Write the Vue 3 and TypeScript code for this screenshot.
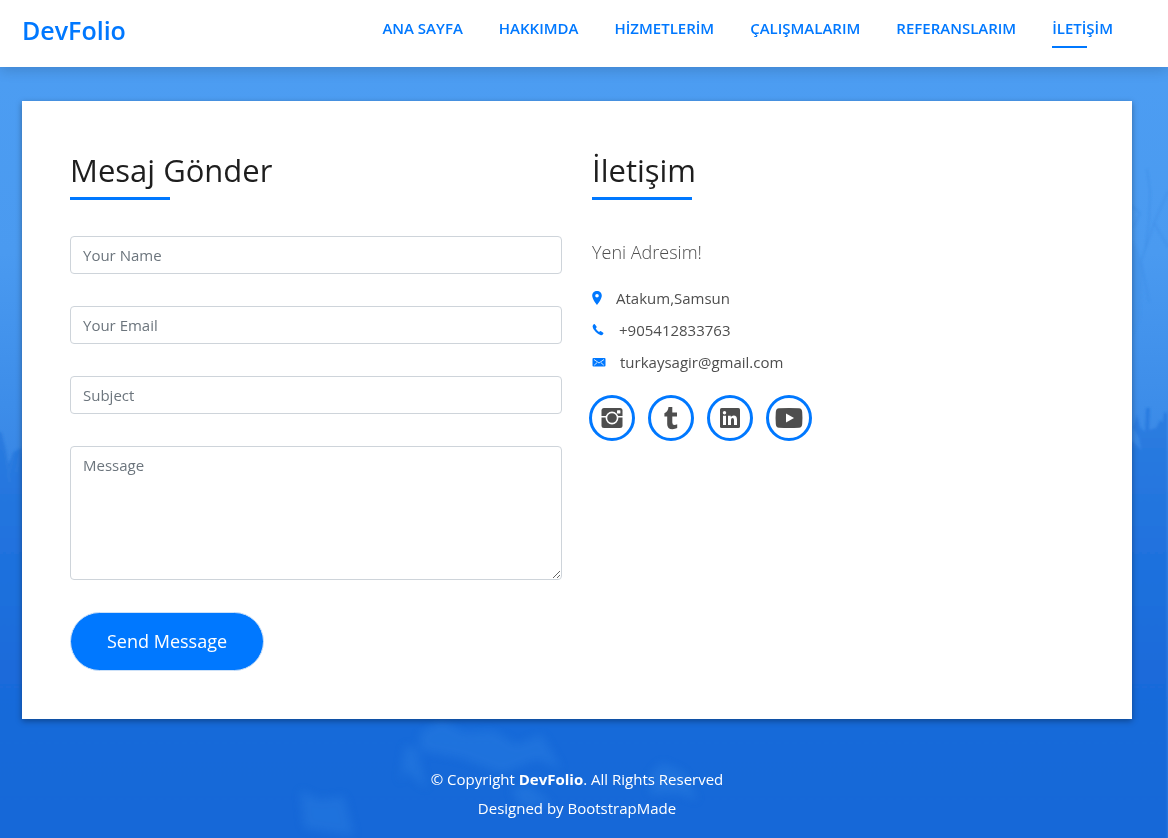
<script setup lang="ts">
import { ref } from 'vue'

interface NavItem {
  label: string
  href: string
  active?: boolean
}

const navItems: NavItem[] = [
  { label: 'ANA SAYFA', href: '#home' },
  { label: 'HAKKIMDA', href: '#about' },
  { label: 'HİZMETLERİM', href: '#service' },
  { label: 'ÇALIŞMALARIM', href: '#work' },
  { label: 'REFERANSLARIM', href: '#testimonials' },
  { label: 'İLETİŞİM', href: '#contact', active: true },
]

const name = ref('')
const email = ref('')
const subject = ref('')
const message = ref('')
</script>

<template>
  <div class="page">
    <svg class="backdrop" viewBox="0 0 1168 838" preserveAspectRatio="none" aria-hidden="true">
      <defs>
        <linearGradient id="sky" x1="0" y1="0" x2="0" y2="1">
          <stop offset="0" stop-color="#4d9ef3" />
          <stop offset="0.3" stop-color="#4a9af0" />
          <stop offset="0.48" stop-color="#3d8de9" />
          <stop offset="0.56" stop-color="#3886e5" />
          <stop offset="1" stop-color="#2a78de" />
        </linearGradient>
        <linearGradient id="ground" x1="0" y1="420" x2="0" y2="838" gradientUnits="userSpaceOnUse">
          <stop offset="0" stop-color="#2b7ce0" />
          <stop offset="0.3" stop-color="#2072de" />
          <stop offset="0.6" stop-color="#1a6bda" />
          <stop offset="1" stop-color="#1768d8" />
        </linearGradient>
        <filter id="soft"><feGaussianBlur stdDeviation="1" /></filter>
        <filter id="haze" x="-20%" y="-20%" width="140%" height="140%"><feGaussianBlur stdDeviation="5" /></filter>
      </defs>
      <rect width="1168" height="838" fill="url(#sky)" />
      <g filter="url(#soft)">
        <path d="M1147 168L1150 190L1149 220L1145 250M1168 190L1154 222L1141 260L1149 300M1154 222L1168 245M1132 205L1140 212L1134 225" fill="none" stroke="#3f8fe8" stroke-width="1" />
        <path d="M1132 240q8 8 11 28l-3 50l-8 15z" fill="#4291e8" opacity=".5" />
        <path d="M-5 420L3 440L8 462L14 449L20 446L26 460V842H-5z" fill="url(#ground)" />
        <path d="M0 430L5 450L10 480M8 475L14 450M16 470L21 446" stroke="#2b7bdf" stroke-width="3" fill="none" />
        <path d="M1128 440l5-1l8 8l-2-12l-6-10l4-12l3 12l5 4l1-23h4l-1 21l7-1l4-8l3 2l1-10l3 1v430H1128z" fill="url(#ground)" />
        <path d="M20 700H1140V842H20z" fill="url(#ground)" />
      </g>
      <g filter="url(#haze)" fill="#398ce8" opacity=".28">
        <path d="M420 728l22-12l22 12l30-2l22 14l26-10l20 35l-25-10l-35 14l-40-15l-42-8z" />
        <path d="M405 740l12 5l10 40l-22-20l-6 15z" />
        <path d="M510 785l18-6l25 20l-30 5zM650 770l12-12l22 10l14 28l-20-8l-28 2z" />
        <path d="M300 785l20 10l24-4l10 40l-50-8z" />
      </g>
    </svg>

    <header class="navbar">
      <a class="brand" href="#home">DevFolio</a>
      <nav class="links" aria-label="Menü">
        <a
          v-for="item in navItems"
          :key="item.href"
          :href="item.href"
          :class="{ active: item.active }"
        >{{ item.label }}</a>
      </nav>
    </header>

    <main class="card">
      <section>
        <h2 class="title">Mesaj Gönder</h2>
        <form class="form" @submit.prevent>
          <input v-model="name" type="text" placeholder="Your Name" aria-label="Your Name" />
          <input v-model="email" type="email" placeholder="Your Email" aria-label="Your Email" />
          <input v-model="subject" type="text" placeholder="Subject" aria-label="Subject" />
          <textarea v-model="message" placeholder="Message" aria-label="Message"></textarea>
          <button type="submit">Send Message</button>
        </form>
      </section>

      <section>
        <h2 class="title">İletişim</h2>
        <p class="lead">Yeni Adresim!</p>
        <ul class="details">
          <li>
            <svg width="10" height="14" viewBox="0 0 10 14" aria-hidden="true">
              <path fill="#0078ff" fill-rule="evenodd" d="M5 0C2.2 0 .2 2.100.2 4.700C.2 8 5 14 5 14S9.800 8 9.800 4.700C9.800 2.100 7.800 0 5 0zM5 6.500A1.800 1.800 0 1 1 5 2.900A1.800 1.800 0 0 1 5 6.500z" />
            </svg>
            <span>Atakum,Samsun</span>
          </li>
          <li>
            <svg width="13" height="14" viewBox="0 0 13 14" aria-hidden="true">
              <path fill="#0078ff" d="M2.800 1.200L4.500 3.600Q4.900 4.200 4.400 4.700L3.700 5.500Q4.600 7.500 7 8.900L8 8.200Q8.500 7.900 9 8.200L11.200 9.700Q11.700 10.200 11.300 10.700Q10.300 12.300 8.900 12.200Q6.600 11.900 3.800 9.100Q.8 6 .6 3.700Q.5 2.100 2 1.100Q2.400.8 2.800 1.200z" />
            </svg>
            <span>+905412833763</span>
          </li>
          <li>
            <svg width="14" height="14" viewBox="0 0 14 14" aria-hidden="true">
              <rect x=".5" y="3" width="13" height="8.500" rx="1" fill="#0078ff" />
              <path d="M2 4.500L7 8L12 4.500M2.200 10.200L5 7.700M11.800 10.200L9 7.700" fill="none" stroke="#fff" stroke-width=".8" />
            </svg>
            <span>turkaysagir@gmail.com</span>
          </li>
        </ul>
        <div class="socials">
          <a href="#instagram" aria-label="Instagram">
            <svg width="22" height="22" viewBox="0 0 22 22" aria-hidden="true">
              <rect x=".5" y="1" width="21" height="20" rx="2.500" fill="#4e4e4e" />
              <path d="M0 9.800H5M17 9.800H22" stroke="#fff" stroke-width="1.400" />
              <circle cx="11" cy="11" r="5.600" fill="#4e4e4e" stroke="#fff" stroke-width="1.600" />
              <rect x="16" y="3.200" width="3.400" height="3.400" rx=".6" fill="#fff" />
            </svg>
          </a>
          <a href="#tumblr" aria-label="Tumblr">
            <svg width="16" height="24" viewBox="0 0 16 24" aria-hidden="true">
              <path fill="#4e4e4e" d="M5.500 1H9.300V6.500H14V10.500H9.300V16.500Q9.300 19 11.500 19Q12.800 19 14.200 18.200V22.100Q12 23.200 9.500 23.200Q4.200 23.200 4.200 18.200V10.500H1.400V7.200Q5 6 5.500 1z" />
            </svg>
          </a>
          <a href="#linkedin" aria-label="LinkedIn">
            <svg width="22" height="22" viewBox="0 0 22 22" aria-hidden="true">
              <rect x="1" y="1" width="20" height="20" rx="1.600" fill="#4e4e4e" />
              <circle cx="5.500" cy="5.800" r="1.700" fill="#fff" />
              <path fill="#fff" d="M4 8.700H7V18H4zM9 8.700H11.800V10Q12.800 8.400 14.700 8.400Q18 8.400 18 12.400V18H15V13Q15 11 13.500 11Q12 11 12 13V18H9z" />
            </svg>
          </a>
          <a href="#youtube" aria-label="YouTube">
            <svg width="28" height="22" viewBox="0 0 28 22" aria-hidden="true">
              <path fill="#4e4e4e" d="M4 1.300Q14 .5 24 1.300Q27 1.500 27.200 5Q27.700 11 27.200 17Q27 20.500 24 20.700Q14 21.500 4 20.700Q1 20.500.8 17Q.3 11 .8 5Q1 1.500 4 1.300z" />
              <path fill="#fff" d="M11 6.500L19 11L11 15.500z" />
            </svg>
          </a>
        </div>
      </section>
    </main>

    <footer class="footer">
      <p>© Copyright <strong>DevFolio</strong>. All Rights Reserved</p>
      <p>Designed by <a href="#bootstrapmade">BootstrapMade</a></p>
    </footer>
  </div>
</template>

<style>
body {
  margin: 0;
}
</style>

<style scoped>
.page {
  position: relative;
  isolation: isolate;
  box-sizing: border-box;
  min-height: 100vh;
  overflow: hidden;
  background: #1768d8;
  color: #4e4e4e;
  font-family: "Segoe UI", "Open Sans", "Noto Sans", sans-serif;
  font-size: 15px;
  line-height: 24px;
}

.backdrop {
  position: absolute;
  inset: 0;
  z-index: -1;
  width: 100%;
  height: 100%;
}

.navbar {
  box-sizing: border-box;
  display: flex;
  align-items: flex-start;
  justify-content: space-between;
  padding: 12px 55px 19px 22px;
  background: #fff;
  box-shadow: 0 4px 12px rgba(0, 0, 0, 0.14);
}

.brand {
  color: #0078ff;
  font-size: 25px;
  font-weight: 600;
  line-height: 36px;
  text-decoration: none;
}

.links {
  display: flex;
  gap: 36px;
  padding-top: 4px;
}

.links a {
  color: #0078ff;
  font-weight: 600;
  text-decoration: none;
}

.links a.active::after {
  content: "";
  display: block;
  width: 35px;
  height: 2px;
  margin-top: 6px;
  background: #0078ff;
}

.card {
  display: grid;
  grid-template-columns: 1fr 1fr;
  gap: 30px;
  margin: 34px 36px 0 22px;
  padding: 48px;
  background: #fff;
  box-shadow: 0 2px 6px rgba(0, 0, 0, 0.35);
}

.title {
  margin: 0 0 36px;
  color: #1e1e1e;
  font-size: 31px;
  font-weight: 500;
  line-height: 42px;
}

.title::after {
  content: "";
  display: block;
  width: 100px;
  height: 3px;
  margin-top: 6px;
  background: #0078ff;
}

.form {
  display: flex;
  flex-direction: column;
  gap: 32px;
}

.form input,
.form textarea {
  box-sizing: border-box;
  width: 100%;
  height: 38px;
  padding: 6px 12px;
  border: 1px solid #ced4da;
  border-radius: 4px;
  background: #fff;
  color: #495057;
  font: inherit;
}

.form textarea {
  display: block;
  height: 134px;
  resize: vertical;
}

.form ::placeholder {
  color: #6c757d;
  opacity: 1;
}

.form button {
  align-self: flex-start;
  padding: 15px 36px;
  border: 1px solid #cde1f8;
  border-radius: 30px;
  background: #0078ff;
  color: #fff;
  font: inherit;
  font-size: 18px;
  line-height: 27px;
}

.lead {
  margin: 0 0 18px;
  font-size: 18px;
  font-weight: 300;
  line-height: 32px;
}

.details {
  margin: 0 0 21px;
  padding: 0;
  list-style: none;
}

.details li {
  display: flex;
  align-items: center;
  gap: 14px;
  height: 24px;
  margin-bottom: 8px;
}

.socials {
  display: flex;
  gap: 13px;
  margin-left: -3px;
}

.socials a {
  box-sizing: border-box;
  display: flex;
  align-items: center;
  justify-content: center;
  width: 46px;
  height: 46px;
  border: 3px solid #0078ff;
  border-radius: 50%;
}

.footer {
  margin: 0 36px 0 22px;
  padding: 48px 0 18px;
  color: #fff;
  text-align: center;
}

.footer p {
  margin: 0 0 5px;
}

.footer a {
  color: inherit;
  text-decoration: none;
}
</style>
